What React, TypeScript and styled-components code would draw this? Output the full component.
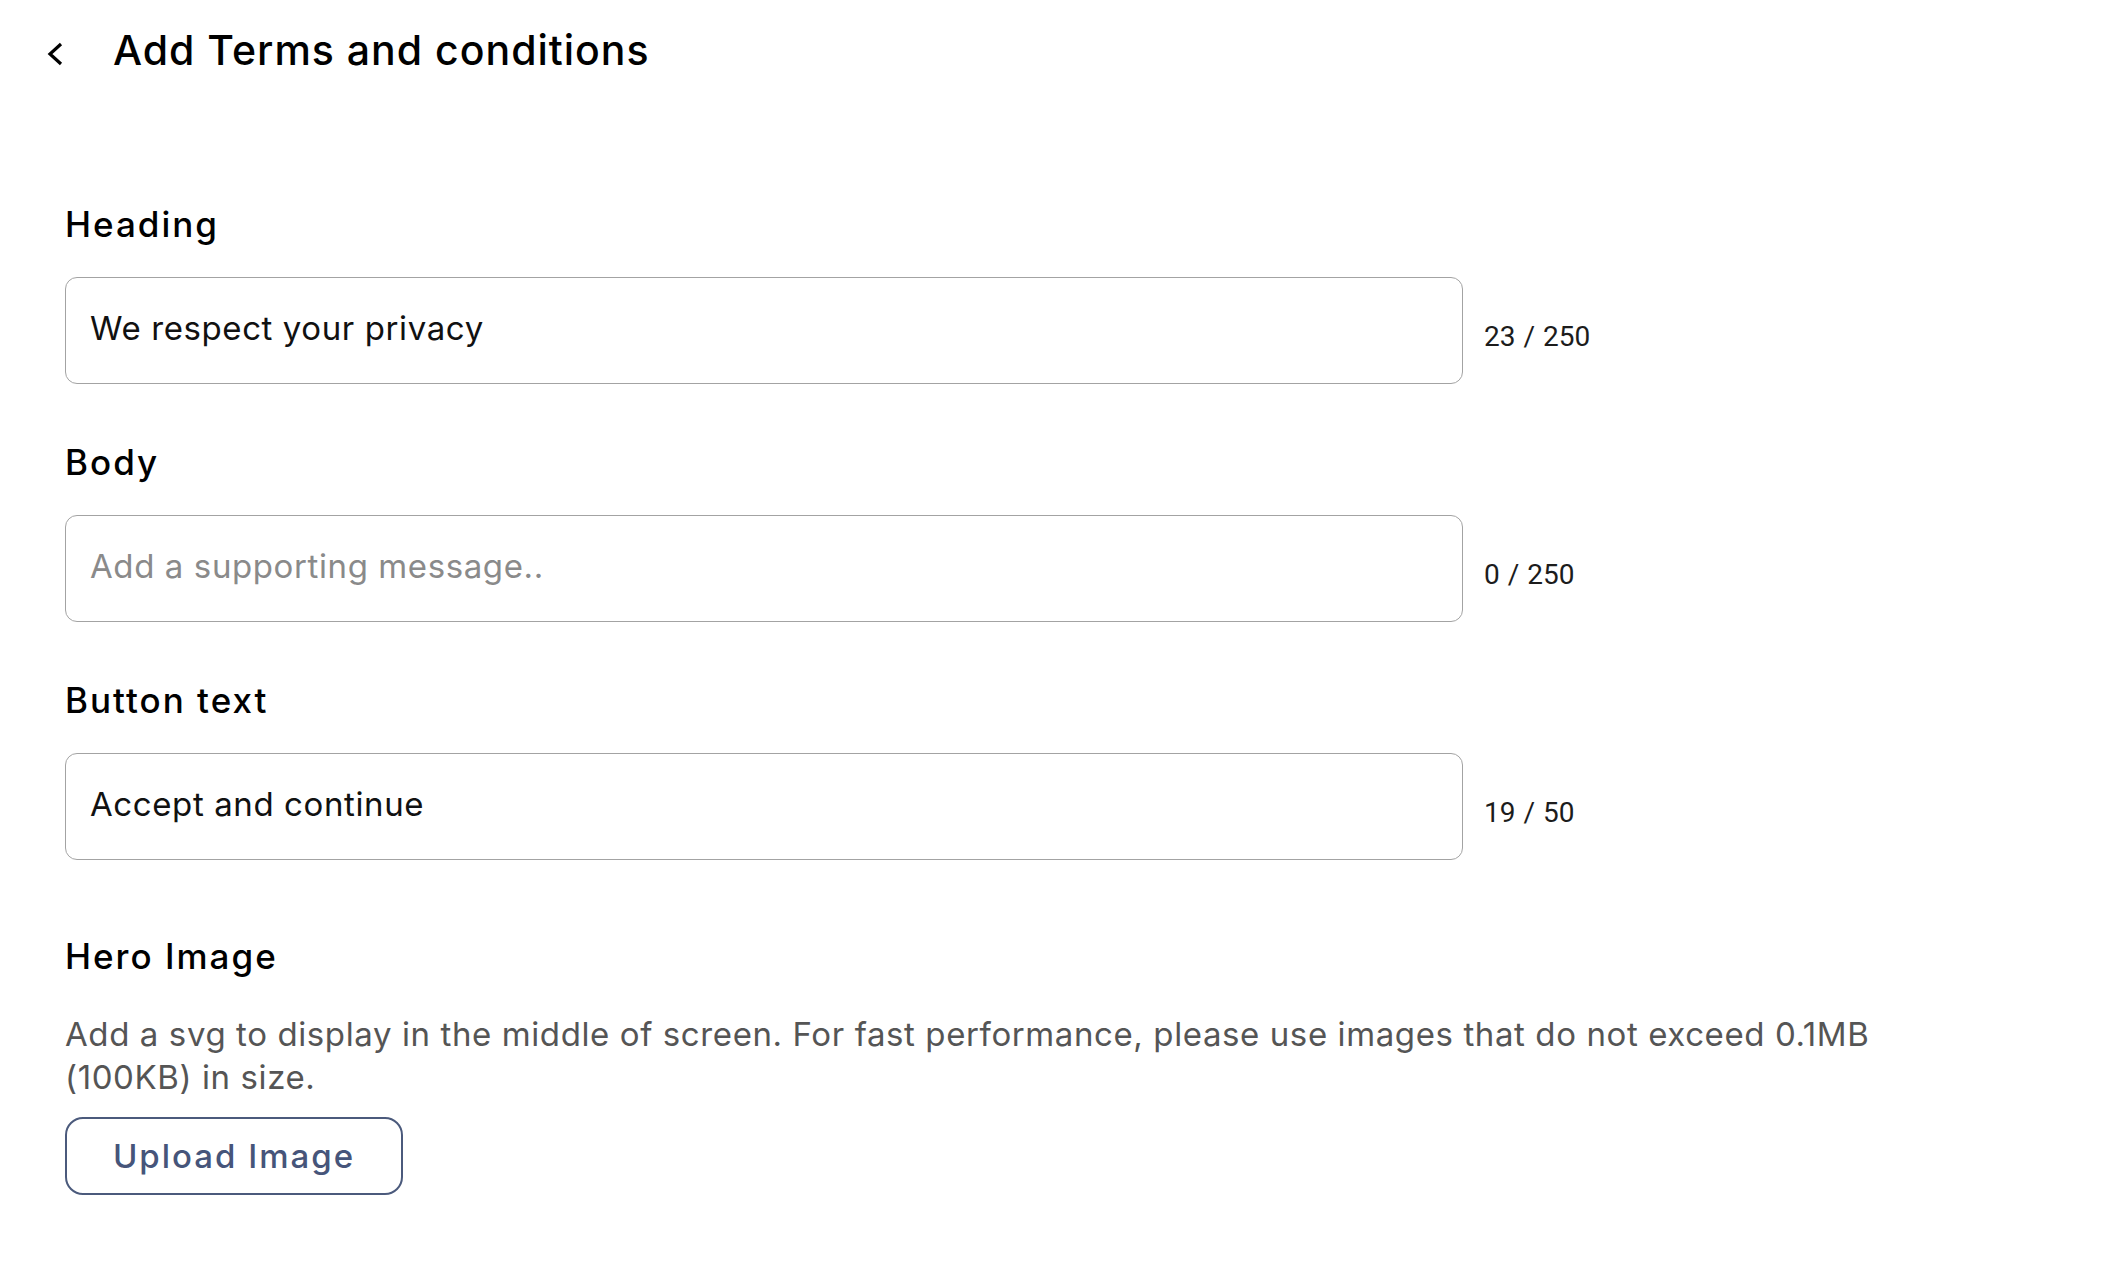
import React from 'react';
import styled, { createGlobalStyle } from 'styled-components';

const GlobalStyle = createGlobalStyle`
  html, body { margin: 0; padding: 0; background: #ffffff; }
  body { font-family: Inter, "Noto Sans", sans-serif; color: #000; }
  *, *::before, *::after { box-sizing: border-box; }
`;

const Page = styled.div`
  padding: 25px 0 60px 0;
`;

const Header = styled.header`
  display: flex;
  align-items: center;
  height: 50px;
  padding-left: 47px;
`;

const BackButton = styled.button`
  display: flex;
  width: 18px;
  height: 26px;
  margin: 8px 0 0 0;
  padding: 0;
  border: 0;
  background: none;
  cursor: pointer;
  color: #000;
`;

const Title = styled.h1`
  margin: 0 0 0 48px;
  font-size: 41px;
  font-weight: 500;
  line-height: 50px;
  letter-spacing: 1px;
  color: #000;
`;

const Form = styled.form`
  display: flex;
  flex-direction: column;
  padding-left: 65px;
  margin-top: 129px;
`;

const Field = styled.div<{ $spaceAfter?: number }>`
  display: flex;
  flex-direction: column;
  margin-bottom: ${(p) => p.$spaceAfter ?? 58}px;
`;

const Label = styled.label`
  font-size: 35px;
  font-weight: 500;
  line-height: 40px;
  letter-spacing: 2px;
  color: #000;
  margin-bottom: 33px;
`;

const InputRow = styled.div`
  display: flex;
  align-items: center;
`;

const TextInput = styled.input`
  width: 1398px;
  height: 107px;
  padding: 0 24px 6px 24px;
  border: 1.5px solid #a3a3a3;
  border-radius: 12px;
  font-family: Inter, "Noto Sans", sans-serif;
  font-size: 33px;
  font-weight: 400;
  letter-spacing: 0.6px;
  color: #111;
  background: #fff;
  outline: none;

  &::placeholder {
    color: #8a8a8a;
  }
`;

const Counter = styled.span`
  margin-left: 21px;
  padding-top: 12px;
  font-family: Roboto, "Liberation Sans", sans-serif;
  font-size: 28px;
  word-spacing: 1px;
  color: #1c1c1c;
`;

const HeroSection = styled.section`
  display: flex;
  flex-direction: column;
  margin-top: 18px;
`;

const SectionTitle = styled.h2`
  margin: 0;
  font-size: 35px;
  font-weight: 500;
  line-height: 40px;
  letter-spacing: 2px;
  color: #000;
`;

const Description = styled.p`
  margin: 37px 0 18px 0;
  max-width: 1850px;
  font-size: 33px;
  font-weight: 400;
  line-height: 43px;
  letter-spacing: 0.6px;
  color: #555555;
`;

const UploadButton = styled.button`
  width: 338px;
  height: 78px;
  border: 2px solid #4b5a7c;
  border-radius: 18px;
  background: #fff;
  font-family: Inter, "Noto Sans", sans-serif;
  font-size: 33px;
  font-weight: 500;
  letter-spacing: 2px;
  color: #46557a;
  cursor: pointer;
`;

const fields = [
  { label: 'Heading', value: 'We respect your privacy', placeholder: '', max: 250 },
  { label: 'Body', value: '', placeholder: 'Add a supporting message..', max: 250 },
  { label: 'Button text', value: 'Accept and continue', placeholder: '', max: 50 },
];

export default function App() {
  return (
    <>
      <GlobalStyle />
      <Page>
        <Header>
          <BackButton type="button" aria-label="Back">
            <svg width="18" height="26" viewBox="0 0 18 26" fill="none">
              <polyline points="14,3 3,13 14,23" stroke="currentColor" strokeWidth="3.2" strokeLinejoin="miter" />
            </svg>
          </BackButton>
          <Title>Add Terms and conditions</Title>
        </Header>
        <Form onSubmit={(e) => e.preventDefault()}>
          {fields.map((f) => (
            <Field key={f.label}>
              <Label>{f.label}</Label>
              <InputRow>
                <TextInput defaultValue={f.value} placeholder={f.placeholder} />
                <Counter>
                  {f.value.length} / {f.max}
                </Counter>
              </InputRow>
            </Field>
          ))}
          <HeroSection>
            <SectionTitle>Hero Image</SectionTitle>
            <Description>
              Add a svg to display in the middle of screen. For fast performance, please use images that do not exceed
              0.1MB (100KB) in size.
            </Description>
            <div>
              <UploadButton type="button">Upload Image</UploadButton>
            </div>
          </HeroSection>
        </Form>
      </Page>
    </>
  );
}
